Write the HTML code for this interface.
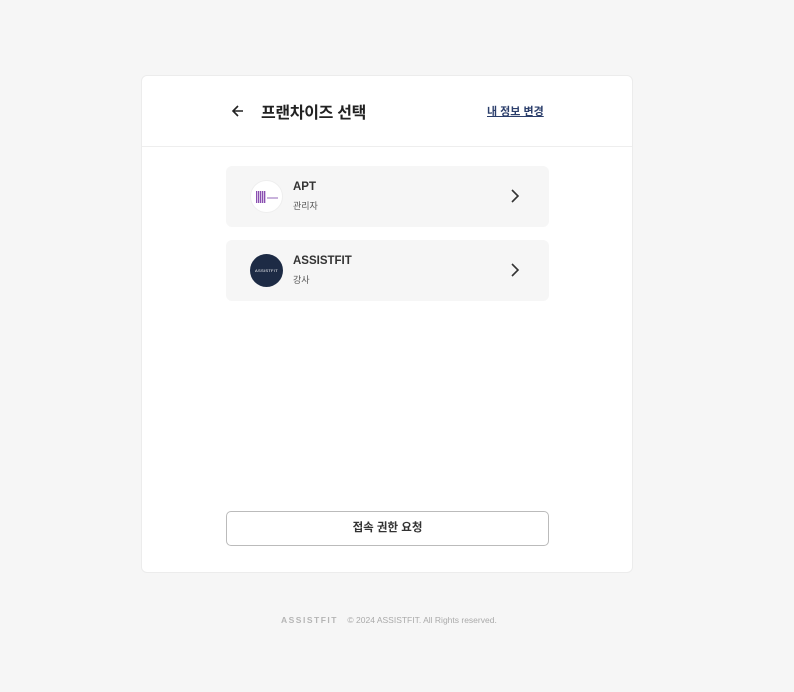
<!DOCTYPE html>
<html><head><meta charset="utf-8"><style>
*{margin:0;padding:0;box-sizing:border-box}
body{width:794px;height:692px;background:#f6f6f6;font-family:"Liberation Sans","Noto Sans CJK KR",sans-serif;position:relative;overflow:hidden}
.card{position:absolute;left:141px;top:75px;width:492px;height:498px;background:#fff;border:1px solid #ececec;border-radius:6px}
.hdr{height:71px;border-bottom:1px solid #eee;position:relative}
.back{position:absolute;left:89px;top:28px}
.title{position:absolute;left:119px;top:23px;font-size:16px;font-weight:bold;color:#222;letter-spacing:-.3px}
.link{position:absolute;left:345px;top:27px;font-size:11px;font-weight:bold;color:#2b3e6b;text-decoration:underline}
.item{position:absolute;left:84px;width:323px;height:61px;background:#f6f6f6;border-radius:6px}
.logo{position:absolute;left:24px;top:14px;width:33px;height:33px;border-radius:50%}
.nm{position:absolute;left:67px;top:15px;font-size:11.5px;font-weight:bold;color:#333}
.rl{position:absolute;left:67px;top:33px;font-size:9px;color:#555}
.chev{position:absolute;right:29px;top:23px}
.btn{position:absolute;left:84px;top:435px;width:323px;height:35px;border:1.5px solid #bbb;border-radius:5px;text-align:center;line-height:32px;font-size:11.5px;font-weight:600;color:#333}
.foot{position:absolute;top:615px;left:281px;font-size:8.5px;color:#aaa}
</style></head><body>
<div class="card">
 <div class="hdr">
  <svg class="back" width="14" height="14" viewBox="0 0 14 14"><path d="M12 7H2M7 2L2 7l5 5" fill="none" stroke="#222" stroke-width="1.6"/></svg>
  <div class="title">프랜차이즈 선택</div>
  <div class="link">내 정보 변경</div>
 </div>
 <div class="item" style="top:90px">
  <div class="logo" style="background:#fff;border:1px solid #eee"><div style="position:absolute;left:5px;top:10px;width:10px;height:12px;background:repeating-linear-gradient(90deg,#8a4fb0 0 1px,#d8c4e6 1px 2px)"></div><div style="position:absolute;left:16px;top:16px;width:11px;height:2px;background:#c9b3dc"></div></div>
  <div class="nm">APT</div><div class="rl">관리자</div>
  <svg class="chev" width="10" height="14" viewBox="0 0 10 14"><path d="M2 1l6 6-6 6" fill="none" stroke="#333" stroke-width="1.6"/></svg>
 </div>
 <div class="item" style="top:164px">
  <div class="logo" style="background:#1d2b45;color:#fff;font-size:4px;text-align:center;line-height:33px;letter-spacing:.3px">ASSISTFIT</div>
  <div class="nm">ASSISTFIT</div><div class="rl">강사</div>
  <svg class="chev" width="10" height="14" viewBox="0 0 10 14"><path d="M2 1l6 6-6 6" fill="none" stroke="#333" stroke-width="1.6"/></svg>
 </div>
 <div class="btn">접속 권한 요청</div>
</div>
<div class="foot"><span style="letter-spacing:1.5px;font-weight:bold;color:#b5b5b5">ASSISTFIT</span>&nbsp;&nbsp;&nbsp; © 2024 ASSISTFIT. All Rights reserved.</div>
</body></html>
